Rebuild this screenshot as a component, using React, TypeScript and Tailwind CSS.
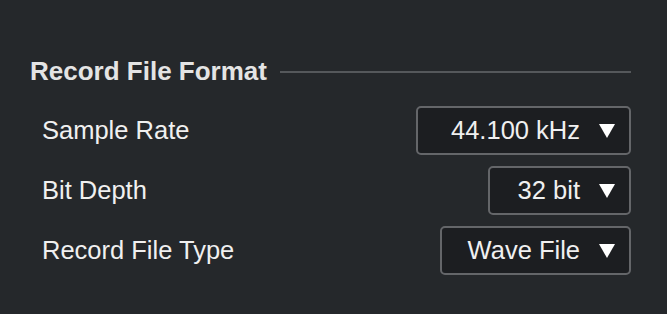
export default function App() {
  const rows = [
    { label: "Sample Rate", value: "44.100 kHz", w: "w-[215px]" },
    { label: "Bit Depth", value: "32 bit", w: "w-[143px]" },
    { label: "Record File Type", value: "Wave File", w: "w-[191px]" },
  ];

  return (
    <main className="h-[314px] w-[667px] overflow-hidden bg-[#25282b] pl-[30px] pr-[36px] pt-[56px] font-['Liberation_Sans',Arial,sans-serif] text-[#f0f0f0]">
      {/* Section header */}
      <div className="flex h-[30px] items-center gap-[13px]">
        <h2 className="text-[26px] font-bold leading-[30px] text-[#e4e4e4]">
          Record File Format
        </h2>
        <div className="mt-[2px] h-[2px] flex-1 bg-[#55585b]" />
      </div>

      {/* Settings */}
      <div className="mt-[20px] flex flex-col gap-[11px]">
        {rows.map((row) => (
          <div key={row.label} className="flex h-[49px] items-center justify-between pl-[12px]">
            <span className="text-[25.5px] leading-none">{row.label}</span>
            <button
              type="button"
              className={`${row.w} flex h-[49px] items-center justify-end gap-[19px] rounded-[5px] border-2 border-[#646669] bg-[#1c1e21] pr-[14px] text-[25.5px] leading-none text-[#f0f0f0]`}
            >
              <span>{row.value}</span>
              <svg width="16" height="14" viewBox="0 0 16 14">
                <polygon points="0,0 16,0 8,14" fill="#ffffff" />
              </svg>
            </button>
          </div>
        ))}
      </div>
    </main>
  );
}
